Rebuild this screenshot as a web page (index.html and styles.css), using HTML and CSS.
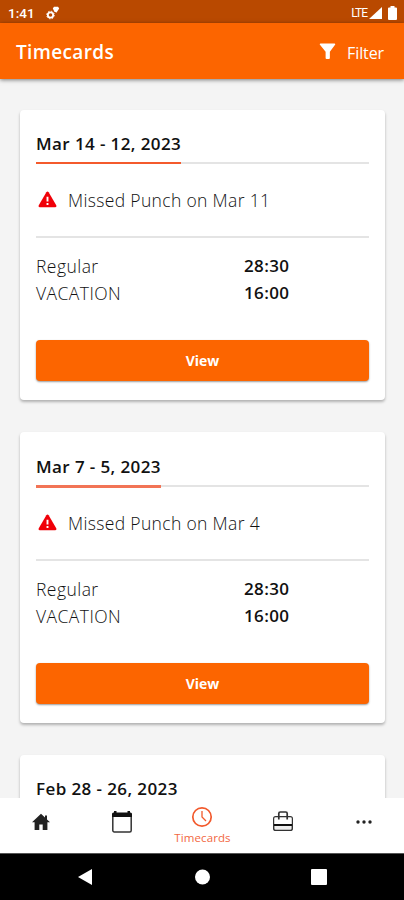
FILE: index.html
```
<!DOCTYPE html>
<html lang="en">
<head>
<meta charset="utf-8">
<title>Timecards</title>
<link rel="stylesheet" href="styles.css">
</head>
<body>
<div class="screen">
  <div class="status">
    <span class="clock">1:41</span>
    <svg class="gears" width="14" height="14" viewBox="0 0 14 14"><circle cx="4.500" cy="9" r="2.700" fill="none" stroke="#fff" stroke-width="1.800"/><circle cx="4.500" cy="9" r="3.800" fill="none" stroke="#fff" stroke-width="1" stroke-dasharray="1.5 1.48"/><path d="M6.800 2.500l1.200-1.700h4L13.200 2.500l-2.800 4.300-2.200-1.500z" fill="#fff"/></svg>
    <span class="lte">LTE</span>
    <svg class="signal" width="13" height="12" viewBox="0 0 13 12"><path d="M13 0v12H0z" fill="#fff"/></svg>
    <svg class="battery" width="9" height="14" viewBox="0 0 9 14"><path d="M2.500 0h4v1.500H8q1 0 1 1V13q0 1-1 1H1q-1 0-1-1V2.500q0-1 1-1h1.500z" fill="#fff"/></svg>
  </div>
  <header class="appbar">
    <h1>Timecards</h1>
    <svg class="funnel" width="17" height="18" viewBox="0 0 17 18"><path d="M1 .5h15q1 .2.700 1.200L11 9.300V16q0 1-1 1H7.500q-1 0-1-1V9.300L.300 1.700Q0 .700 1 .5z" fill="#fff"/></svg>
    <span class="filter">Filter</span>
  </header>
  <main class="list">
    <section class="card">
      <div class="head"><h2>Mar 14 - 12, 2023</h2></div>
      <div class="alert"><svg width="19" height="17" viewBox="0 0 20 17"><path d="M8.800.8q1.200-1.400 2.400 0l8 13.800q.7 1.900-1.200 2.100H2q-1.900-.2-1.200-2.100z" fill="#f00008"/><path d="M10 5.500v5M10 12.200v2" stroke="#fff" stroke-width="2"/></svg><span>Missed Punch on Mar 11</span></div>
      <dl class="hours"><dt>Regular</dt><dd>28:30</dd><dt>VACATION</dt><dd>16:00</dd></dl>
      <button class="view">View</button>
    </section>
    <section class="card soft">
      <div class="head"><h2>Mar 7 - 5, 2023</h2></div>
      <div class="alert"><svg width="19" height="17" viewBox="0 0 20 17"><path d="M8.800.8q1.200-1.400 2.400 0l8 13.800q.7 1.900-1.200 2.100H2q-1.900-.2-1.200-2.100z" fill="#f00008"/><path d="M10 5.500v5M10 12.200v2" stroke="#fff" stroke-width="2"/></svg><span>Missed Punch on Mar 4</span></div>
      <dl class="hours"><dt>Regular</dt><dd>28:30</dd><dt>VACATION</dt><dd>16:00</dd></dl>
      <button class="view">View</button>
    </section>
    <section class="card">
      <div class="head"><h2>Feb 28 - 26, 2023</h2></div>
    </section>
  </main>
  <nav class="tabs">
    <div class="tab"><svg width="24" height="24" viewBox="0 0 24 24"><path d="M12 3.800L3 12.200h2.600V20h4.700v-5.500h3.400V20h4.700v-7.800H21l-3-2.800V5.500h-2v2z" fill="#222"/></svg></div>
    <div class="tab"><svg width="24" height="24" viewBox="0 0 24 24"><rect x="2.800" y="4" width="18.400" height="18" rx="1.500" fill="none" stroke="#333" stroke-width="1.500"/><path d="M2 4q0-1.500 1.500-1.500H4V1h2.500v1.500h11V1H20v1.500h.5Q22 2.500 22 4v3H2z" fill="#111"/></svg></div>
    <div class="tab active"><svg width="22" height="22" viewBox="0 0 22 22"><circle cx="11" cy="11" r="9.200" fill="none" stroke="#f2592c" stroke-width="1.700"/><path d="M11 5v6l4 4" fill="none" stroke="#f2592c" stroke-width="1.300"/></svg><span>Timecards</span></div>
    <div class="tab"><svg width="24" height="24" viewBox="0 0 24 24"><rect x="2.700" y="6.700" width="18.600" height="13.700" rx="2" fill="#eee" stroke="#333" stroke-width="1.400"/><path d="M3.500 7.500h17V14h-17z" fill="#fff"/><path d="M7.800 9.500V3.500q0-1.500 1.500-1.500h5.400q1.500 0 1.500 1.500v6" fill="none" stroke="#333" stroke-width="1.700"/><path d="M3 15h18" stroke="#111" stroke-width="2"/></svg></div>
    <div class="tab"><svg width="24" height="24" viewBox="0 0 24 24"><g fill="#222"><circle cx="6" cy="12" r="1.700"/><circle cx="12" cy="12" r="1.700"/><circle cx="18" cy="12" r="1.700"/></g></svg></div>
  </nav>
  <div class="system">
    <svg width="16" height="18" viewBox="0 0 16 18"><path d="M15 1v16L1 9z" fill="#fff"/></svg>
    <svg width="16" height="16" viewBox="0 0 16 16"><circle cx="8.500" cy="8" r="7.500" fill="#fff"/></svg>
    <svg width="16" height="16" viewBox="0 0 16 16"><rect width="16" height="16" rx="1" fill="#fff"/></svg>
  </div>
</div>
</body>
</html>
```
FILE: styles.css
```
* { box-sizing: border-box; }
body { margin: 0; font-family: "Open Sans", sans-serif; color: #111; }
svg { display: block; flex: none; }
h1, h2, dl, dd { margin: 0; }
.screen { width: 404px; height: 900px; display: flex; flex-direction: column; background: #f4f4f4; overflow: hidden; }
.status { flex: none; height: 23px; background: #b94900; color: #fff; display: flex; align-items: center; padding: 2px 7px 0 8px; font-family: Roboto, sans-serif; }
.clock { font-size: 13.500px; font-weight: 500; width: 38px; }
.lte { font-size: 12px; margin-left: auto; letter-spacing: -1px; margin-right: 2px; }
.battery { margin-left: 6px; }
.appbar { flex: none; height: 56px; background: #fc6500; color: #fff; display: flex; align-items: center; padding: 0 20px 0 16px; box-shadow: 0 1px 4px rgba(0,0,0,.5); z-index: 1; }
.appbar h1 { font-size: 19px; font-weight: 600; line-height: 26px; letter-spacing: .35px; padding-top: 2px; }
.funnel { margin-left: auto; margin-right: 11px; padding-top: 1px; }
.filter { font-size: 16px; line-height: 22px; padding-top: 3px; letter-spacing: -.1px; }
.list { flex: 1; min-height: 0; overflow: hidden; padding: 31px 19px 0 20px; display: flex; flex-direction: column; gap: 32px; }
.card { flex: none; height: 290px; background: #fff; border-radius: 4px; padding: 20px 16px 19px; box-shadow: 0 2px 3px rgba(0,0,0,.28); display: flex; flex-direction: column; }
.card.soft { height: 291px; padding-top: 21px; }
.head { height: 34px; border-bottom: 2px solid #e4e4e4; display: flex; }
.head h2 { height: 34px; padding-top: 3px; font-size: 17px; letter-spacing: .4px; font-weight: 600; line-height: 22px; border-bottom: 2px solid #f45a2c; white-space: nowrap; }
.soft .head h2 { height: 35px; border-bottom: 3px solid #f27456; }
.alert { height: 74px; border-bottom: 2px solid #e4e4e4; display: flex; align-items: center; gap: 11px; padding-left: 2px; font-size: 17.500px; letter-spacing: .34px; font-weight: 300; }
.alert svg { margin-top: -2px; }
.hours { display: grid; grid-template-columns: 208px 1fr; grid-auto-rows: 27px; padding-top: 15px; line-height: 27px; font-size: 17.500px; letter-spacing: .45px; font-weight: 300; }
.hours dd { font-size: 17px; letter-spacing: .35px; font-weight: 600; line-height: 26px; }
.view { margin-top: auto; height: 41px; border: 0; border-radius: 4px; background: #fc6500; color: #fff; font: 700 14px "Open Sans", sans-serif; box-shadow: 0 1px 2px rgba(0,0,0,.4); }
.tabs { flex: none; height: 55px; background: #fff; display: grid; grid-template-columns: repeat(5, 1fr); z-index: 1; padding-left: 1px; }
.tab { display: flex; flex-direction: column; align-items: center; padding-top: 12px; }
.tab.active { padding-top: 8px; color: #f2673f; font-size: 11.500px; letter-spacing: .1px; line-height: 16px; }
.tab.active span { margin-top: 2px; }
.system { flex: none; height: 47px; background: #000; display: flex; align-items: center; justify-content: space-between; padding: 0 77px; border-top: 1px solid #555; }
```
